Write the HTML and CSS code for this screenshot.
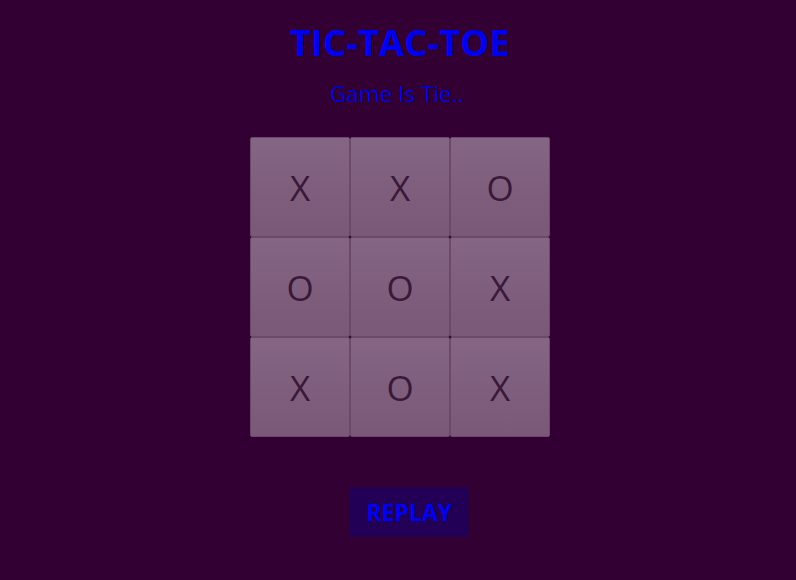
FILE: index.html
```html
<!DOCTYPE html>
<html>
<head>
<meta charset="utf-8">
<link rel="stylesheet" href="styles.css">
</head>
<body>
<div class="app">
  <h1 class="title">TIC-TAC-TOE</h1>
  <p class="status">Game Is Tie..</p>
  <div class="board">
    <div class="cell">X</div>
    <div class="cell">X</div>
    <div class="cell">O</div>
    <div class="cell">O</div>
    <div class="cell">O</div>
    <div class="cell">X</div>
    <div class="cell">X</div>
    <div class="cell">O</div>
    <div class="cell">X</div>
  </div>
  <button class="replay">REPLAY</button>
</div>
</body>
</html>
```
FILE: styles.css
```css
html, body {
  margin: 0;
  padding: 0;
  background: #330033;
  height: 100%;
}
.app {
  display: flex;
  flex-direction: column;
  align-items: center;
  padding-left: 4px;
  font-family: "Open Sans", sans-serif;
}
.title {
  margin: 18px 0 0;
  font-size: 36.5px;
  font-weight: 700;
  line-height: 48px;
  color: #0000ee;
}
.status {
  margin: 13px 0 0;
  padding-right: 6px;
  font-size: 22.5px;
  line-height: 30px;
  color: #0000dd;
}
.board {
  margin-top: 28px;
  display: grid;
  grid-template-columns: repeat(3, 100px);
  grid-template-rows: repeat(3, 100px);
}
.cell {
  box-sizing: border-box;
  border: 1px solid #6b4a69;
  border-radius: 2px;
  background: linear-gradient(#846584, #7a5877);
  display: flex;
  align-items: center;
  justify-content: center;
  font-size: 35px;
  color: #3a1838;
}
.replay {
  margin-top: 50px;
  margin-left: 19px;
  width: 119px;
  height: 50px;
  border: none;
  background: #220055;
  color: #0000ee;
  font-family: "Open Sans", sans-serif;
  font-weight: 700;
  font-size: 23px;
  padding: 0;
}
```
